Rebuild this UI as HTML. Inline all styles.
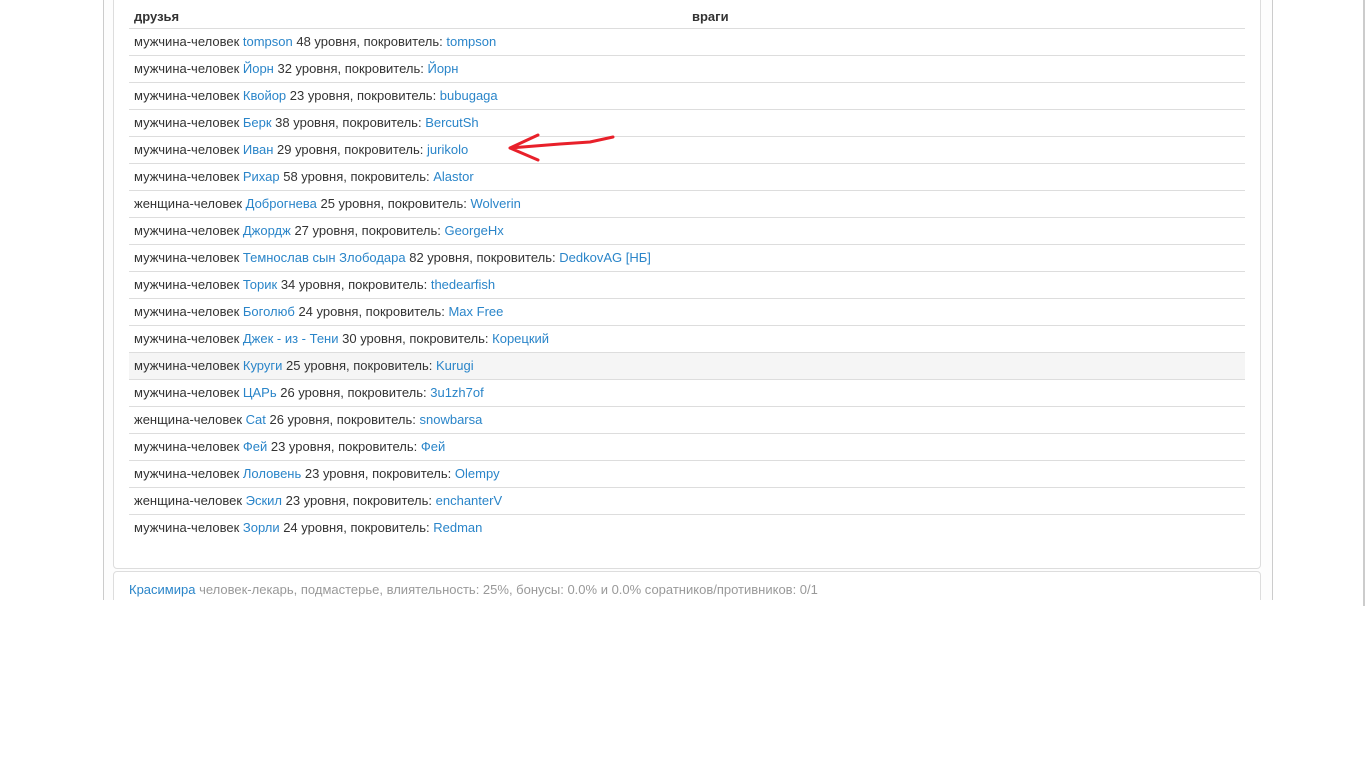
<!DOCTYPE html>
<html><head><meta charset="utf-8"><style>
body{margin:0;width:1366px;height:768px;background:#fff;font-family:"Liberation Sans",Arial,sans-serif;font-size:13px;color:#333;position:relative;overflow:hidden}
.wrap{position:absolute;left:103px;top:0;width:1168px;height:600px;border-left:1px solid #ccc;border-right:1px solid #ccc;background:#fdfdfd;overflow:hidden}
.p1{position:absolute;left:9px;top:-6px;width:1146px;height:573px;border:1px solid #ddd;border-radius:4px;background:#fff}
.p2{position:absolute;left:9px;top:571px;width:1146px;height:40px;border:1px solid #ddd;border-radius:4px;background:#fff}
table{position:absolute;left:15px;top:10px;width:1116px;border-collapse:collapse}
th{text-align:left;font-weight:bold;height:23px;padding:0 5px;border-bottom:1px solid #ddd;vertical-align:middle;line-height:14px}
td{height:26px;padding:0 5px;border-bottom:1px solid #ddd;vertical-align:middle;line-height:14px}
tr:last-child td{border-bottom:none}
tr.h td{background:#f5f5f5}
a{color:#2a85c9;text-decoration:none}
.g{color:#999}
.sb{position:absolute;left:1363px;top:0;width:2px;height:606px;background:#ccc}
</style></head><body>
<div class="wrap">
<div class="p1">
<table>
<tr><th style="width:548px">друзья</th><th>враги</th></tr>
<tr><td colspan=2>мужчина-человек <a>tompson</a> 48 уровня, покровитель: <a>tompson</a></td></tr>
<tr><td colspan=2>мужчина-человек <a>Йорн</a> 32 уровня, покровитель: <a>Йорн</a></td></tr>
<tr><td colspan=2>мужчина-человек <a>Квойор</a> 23 уровня, покровитель: <a>bubugaga</a></td></tr>
<tr><td colspan=2>мужчина-человек <a>Берк</a> 38 уровня, покровитель: <a>BercutSh</a></td></tr>
<tr><td colspan=2>мужчина-человек <a>Иван</a> 29 уровня, покровитель: <a>jurikolo</a></td></tr>
<tr><td colspan=2>мужчина-человек <a>Рихар</a> 58 уровня, покровитель: <a>Alastor</a></td></tr>
<tr><td colspan=2>женщина-человек <a>Доброгнева</a> 25 уровня, покровитель: <a>Wolverin</a></td></tr>
<tr><td colspan=2>мужчина-человек <a>Джордж</a> 27 уровня, покровитель: <a>GeorgeHx</a></td></tr>
<tr><td colspan=2>мужчина-человек <a>Темнослав сын Злободара</a> 82 уровня, покровитель: <a>DedkovAG [НБ]</a></td></tr>
<tr><td colspan=2>мужчина-человек <a>Торик</a> 34 уровня, покровитель: <a>thedearfish</a></td></tr>
<tr><td colspan=2>мужчина-человек <a>Боголюб</a> 24 уровня, покровитель: <a>Max Free</a></td></tr>
<tr><td colspan=2>мужчина-человек <a>Джек - из - Тени</a> 30 уровня, покровитель: <a>Корецкий</a></td></tr>
<tr class="h"><td colspan=2>мужчина-человек <a>Куруги</a> 25 уровня, покровитель: <a>Kurugi</a></td></tr>
<tr><td colspan=2>мужчина-человек <a>ЦАРь</a> 26 уровня, покровитель: <a>3u1zh7of</a></td></tr>
<tr><td colspan=2>женщина-человек <a>Cat</a> 26 уровня, покровитель: <a>snowbarsa</a></td></tr>
<tr><td colspan=2>мужчина-человек <a>Фей</a> 23 уровня, покровитель: <a>Фей</a></td></tr>
<tr><td colspan=2>мужчина-человек <a>Лоловень</a> 23 уровня, покровитель: <a>Olempy</a></td></tr>
<tr><td colspan=2>женщина-человек <a>Эскил</a> 23 уровня, покровитель: <a>enchanterV</a></td></tr>
<tr><td colspan=2>мужчина-человек <a>Зорли</a> 24 уровня, покровитель: <a>Redman</a></td></tr>
</table>
</div>
<div class="p2"><div style="position:absolute;left:15px;top:10px"><a>Красимира</a> <span class="g">человек-лекарь, подмастерье, влиятельность: 25%, бонусы: 0.0% и 0.0% соратников/противников: 0/1</span></div></div>
</div>
<div class="sb"></div>
<svg style="position:absolute;left:0;top:0" width="1366" height="768"><path d="M613 137 L590 142 L560 144 L510 148 M510 148 L538 135 M510 148 L538 160" stroke="#e8202a" stroke-width="3" fill="none" stroke-linecap="round" stroke-linejoin="round"/></svg>
</body></html>
